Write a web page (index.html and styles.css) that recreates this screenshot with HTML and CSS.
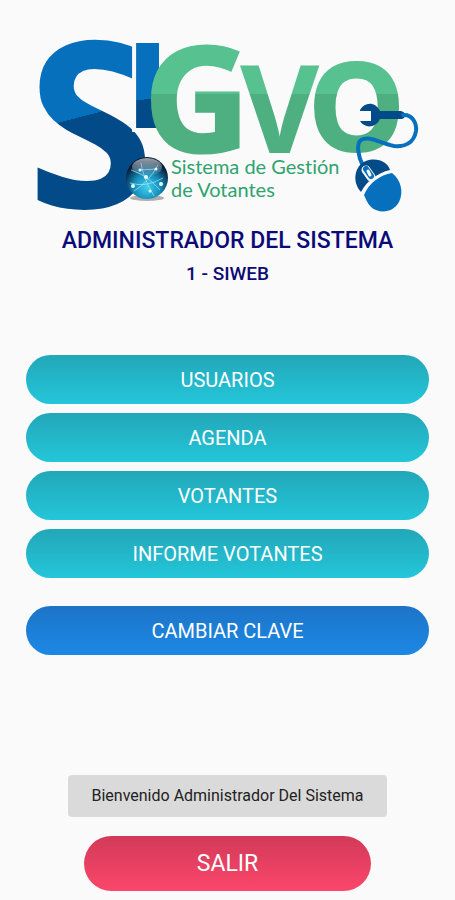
FILE: index.html
```html
<!DOCTYPE html>
<html lang="es">
<head>
    <meta charset="UTF-8">
    <meta name="viewport" content="width=device-width, initial-scale=1.0">
    <title>SIGVO - Sistema de Gestión de Votantes</title>
    <link rel="stylesheet" href="styles.css">
</head>
<body>

    <main class="container">
        <svg class="logo" viewBox="26 28 403 188" role="img" aria-label="SIGVO, Sistema de Gestión de Votantes">
            <defs>
                <linearGradient id="blueS" gradientUnits="userSpaceOnUse" x1="75" y1="65" x2="101" y2="165">
                    <stop offset="50%" stop-color="#0670bd"/>
                    <stop offset="50%" stop-color="#034a88"/>
                </linearGradient>
                <linearGradient id="blueI" gradientUnits="userSpaceOnUse" x1="142" y1="49" x2="154" y2="149">
                    <stop offset="50%" stop-color="#0670bd"/>
                    <stop offset="50%" stop-color="#034a88"/>
                </linearGradient>
                <linearGradient id="green" gradientUnits="userSpaceOnUse" x1="0" y1="44" x2="0" y2="144">
                    <stop offset="50%" stop-color="#58c190"/>
                    <stop offset="50%" stop-color="#4eb080"/>
                </linearGradient>
                <radialGradient id="globe" cx="50%" cy="72%" r="62%">
                    <stop offset="0%" stop-color="#3fd0ee"/>
                    <stop offset="50%" stop-color="#168fbd"/>
                    <stop offset="85%" stop-color="#0a3b5e"/>
                    <stop offset="100%" stop-color="#06192f"/>
                </radialGradient>
                <linearGradient id="shine" x1="0" y1="0" x2="0" y2="1">
                    <stop offset="0%" stop-color="#fff" stop-opacity="0.6"/>
                    <stop offset="100%" stop-color="#fff" stop-opacity="0.05"/>
                </linearGradient>
            </defs>

            <text class="letter" x="27" y="208" font-size="231" fill="url(#blueS)">S</text>
            <text class="letter letter-i" x="127" y="128" font-size="118" fill="url(#blueI)">I</text>
            <text class="letter" x="144" y="152" font-size="146" fill="url(#green)" stroke="url(#green)" stroke-width="3">G</text>
            <text class="letter" x="240" y="153" font-size="122" fill="url(#green)">V</text>
            <text class="letter" x="308" y="151" font-size="122" fill="url(#green)" stroke="url(#green)" stroke-width="2">O</text>

            <!-- globe -->
            <ellipse cx="147" cy="198" rx="17" ry="3" fill="#000" opacity="0.3"/>
            <circle cx="147" cy="178" r="21" fill="url(#globe)"/>
            <ellipse cx="147" cy="167" rx="15" ry="9" fill="url(#shine)"/>
            <g fill="none" stroke="#b9f2ff" stroke-width="1" opacity="0.6">
                <path d="M131 170Q147 175 160 190M134 191Q148 183 158 165M141 163Q143 178 154 196M130 183Q146 188 163 178M140 170L157 169"/>
            </g>
            <g fill="#e4fcff">
                <circle cx="133" cy="186" r="2"/>
                <circle cx="140" cy="170" r="1.5"/>
                <circle cx="146" cy="177" r="2"/>
                <circle cx="156" cy="169" r="1.5"/>
                <circle cx="161" cy="184" r="2"/>
                <circle cx="150" cy="191" r="1.5"/>
            </g>

            <text class="tagline" x="171" y="174">Sistema de Gestión</text>
            <text class="tagline" x="171" y="197">de Votantes</text>

            <!-- wrench -->
            <path fill="#034a88" d="M360 110C365 101 376 102 380 111H401Q405 112 405 115Q405 119 401 119H380C376 128 365 129 360 121H371V111H360Z"/>
            <!-- mouse and cable -->
            <path fill="none" stroke="#0670bd" stroke-width="4" stroke-linecap="round" d="M403 115C412 114 417 123 416 131C414 143 405 147 394 146C381 144 370 135 361 140C356 144 358 156 363 166"/>
            <path fill="#034a88" d="M361 192C352 182 354 166 366 161C377 157 388 162 390 170C377 173 367 181 361 192Z"/>
            <path fill="#0670bd" d="M364 195C369 183 380 175 392 173C401 180 404 192 399 202C393 213 379 214 371 207C367 203 366 199 364 195Z"/>
            <path stroke="#fafafa" stroke-width="9" stroke-linecap="round" d="M366 170L371 177"/>
            <path stroke="#0670bd" stroke-width="6" stroke-linecap="round" d="M366 169L371 176"/>
            <path stroke="#fafafa" stroke-width="3" stroke-linecap="round" d="M368 171L370 175"/>
        </svg>

        <h1 class="role">ADMINISTRADOR DEL SISTEMA</h1>
        <h2 class="user">1 - SIWEB</h2>

        <nav class="menu">
            <button type="button" class="btn menu-btn">USUARIOS</button>
            <button type="button" class="btn menu-btn">AGENDA</button>
            <button type="button" class="btn menu-btn">VOTANTES</button>
            <button type="button" class="btn menu-btn">INFORME VOTANTES</button>
            <button type="button" class="btn password-btn">CAMBIAR CLAVE</button>
        </nav>

        <footer class="footer">
            <p class="message" role="status">Bienvenido Administrador Del Sistema</p>
            <button type="button" class="btn exit-btn">SALIR</button>
        </footer>
    </main>

</body>
</html>
```
FILE: styles.css
```css
* {
    box-sizing: border-box;
}
body {
    font-family: Roboto, sans-serif;
    background: #fafafa;
    margin: 0;
}
.container {
    display: flex;
    flex-direction: column;
    min-height: 100vh;
    max-width: 600px;
    margin: 0 auto;
    padding: 28px 26px 9px;
    text-align: center;
}
.logo {
    display: block;
    width: 100%;
}
.letter {
    font-family: "Open Sans", sans-serif;
    font-weight: 700;
}
.letter-i {
    font-weight: 800;
    stroke: #fafafa;
    stroke-width: 8px;
    paint-order: stroke;
}
.tagline {
    font-family: Lato, sans-serif;
    font-size: 20px;
    font-variant-ligatures: none;
    fill: #2fa36f;
}
.role,
.user {
    margin: 0;
    color: #0b0b78;
    font-weight: 500;
}
.role {
    margin-top: 10px;
    font-size: 23px;
    line-height: 30px;
}
.user {
    margin-top: 6px;
    font-size: 19px;
    line-height: 24px;
}
.menu {
    display: flex;
    flex-direction: column;
    gap: 9px;
    margin-top: 69px;
}
.btn {
    width: 100%;
    height: 49px;
    padding: 0;
    border: none;
    border-radius: 28px;
    color: white;
    font-family: inherit;
    font-size: 20px;
    cursor: pointer;
}
.menu-btn {
    background: linear-gradient(#22a7b8, #24c6da);
}
.password-btn {
    margin-top: 19px;
    background: linear-gradient(#1d74c8, #1c88e5);
}
.btn:hover {
    opacity: 0.9;
}
.footer {
    display: flex;
    flex-direction: column;
    align-items: center;
    gap: 19px;
    margin-top: auto;
    padding-top: 24px;
}
.message {
    margin: 0;
    padding: 11px 23px;
    border-radius: 4px;
    background: #dadada;
    color: #222;
    font-size: 16px;
    line-height: 20px;
}
.exit-btn {
    width: 71%;
    height: 55px;
    background: linear-gradient(#d23a58, #fb466b);
    font-size: 23px;
}
```
